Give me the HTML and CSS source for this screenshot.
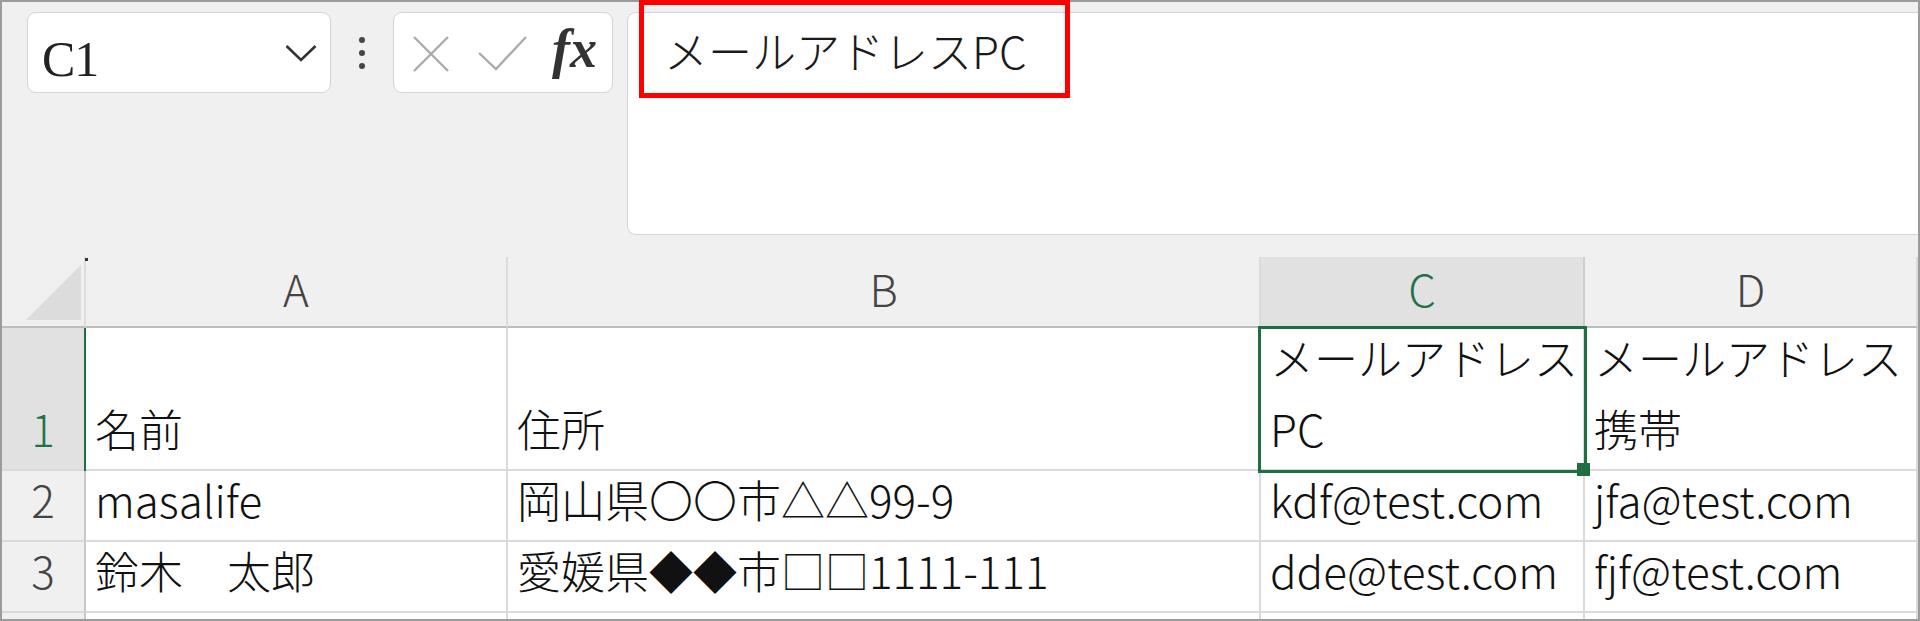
FILE: index.html
```html
<!DOCTYPE html>
<html lang="ja">
<head>
<meta charset="utf-8">
<title>Excel</title>
<link rel="stylesheet" href="styles.css">
</head>
<body>
<div class="frame">
  <div class="toolbar">
    <div class="namebox">
      <span class="ref">C1</span>
      <svg class="chev" width="32" height="18" viewBox="0 0 32 18"><polyline points="1.5,2 16,16 30.5,2" fill="none" stroke="#333" stroke-width="2.6"/></svg>
    </div>
    <div class="more"><i></i><i></i><i></i></div>
    <div class="btns">
      <svg class="ico-x" width="36" height="36" viewBox="0 0 36 36"><path d="M1 1 L35 35 M35 1 L1 35" stroke="#ababab" stroke-width="2.4" fill="none"/></svg>
      <svg class="ico-ok" width="50" height="36" viewBox="0 0 50 36"><polyline points="1,18 18,34 48,2" fill="none" stroke="#ababab" stroke-width="2.4"/></svg>
      <span class="fx">fx</span>
    </div>
    <div class="fbar"><span class="ftext">メールアドレスPC</span></div>
  </div>
  <div class="mark"></div>
  <div class="sheet">
    <div class="corner"><span class="tri"></span></div>
    <div class="ch">A</div>
    <div class="ch">B</div>
    <div class="ch ch-sel">C</div>
    <div class="ch">D</div>

    <div class="rh rh-sel">1</div>
    <div class="c">名前</div>
    <div class="c">住所</div>
    <div class="c c-sel"><span>メールアドレス<br>PC</span><div class="sel"><i class="handle"></i></div></div>
    <div class="c">メールアドレス<br>携帯</div>

    <div class="rh">2</div>
    <div class="c">masalife</div>
    <div class="c">岡山県〇〇市△△99-9</div>
    <div class="c">kdf@test.com</div>
    <div class="c">jfa@test.com</div>

    <div class="rh">3</div>
    <div class="c">鈴木　太郎</div>
    <div class="c">愛媛県◆◆市□□1111-111</div>
    <div class="c">dde@test.com</div>
    <div class="c">fjf@test.com</div>

    <div class="rh last"></div>
    <div class="c last"></div>
    <div class="c last"></div>
    <div class="c last"></div>
    <div class="c last"></div>
  </div>
</div>
</body>
</html>
```
FILE: styles.css
```css
html, body {
  margin: 0;
  padding: 0;
  background: #f0f0f0;
}

.frame {
  width: 1920px;
  height: 621px;
  box-sizing: border-box;
  border: 2px solid #9b9b9b;
  background: #f0f0f0;
  position: relative;
  display: flex;
  flex-direction: column;
  font-family: "Noto Sans CJK JP", "Noto Sans", sans-serif;
  font-weight: 300;
  color: #1a1a1a;
}

/* ---------- formula toolbar ---------- */
.toolbar {
  display: flex;
  align-items: flex-start;
  padding: 10px 0 0 25px;
  height: 223px;
}

.namebox {
  width: 304px;
  height: 81px;
  box-sizing: border-box;
  background: #fff;
  border: 1px solid #d4d4d4;
  border-radius: 9px;
  display: flex;
  align-items: center;
  justify-content: space-between;
  padding: 0 13px 0 14px;
}

.ref {
  font-family: "Liberation Serif", "DejaVu Serif", serif;
  font-weight: 400;
  font-size: 50px;
  color: #222;
  letter-spacing: -1px;
  margin-top: 12px;
}

.chev {
  display: block;
  margin-top: 1px;
}

.more {
  width: 20px;
  height: 81px;
  margin-left: 21px;
  display: flex;
  flex-direction: column;
  align-items: center;
  justify-content: center;
  gap: 7px;
}

.more i {
  display: block;
  width: 6px;
  height: 6px;
  border-radius: 50%;
  background: #454545;
}

.btns {
  width: 220px;
  height: 81px;
  margin-left: 21px;
  box-sizing: border-box;
  background: #fff;
  border: 1px solid #d4d4d4;
  border-radius: 9px;
  display: flex;
  align-items: center;
  padding-left: 19px;
}

.ico-x {
  display: block;
  margin-top: 2px;
}

.ico-ok {
  display: block;
  margin-left: 29px;
  margin-top: 0;
}

.fx {
  font-family: "Liberation Serif", "DejaVu Serif", serif;
  font-style: italic;
  font-weight: bold;
  font-size: 54px;
  color: #333;
  margin-left: 24px;
  margin-bottom: 8px;
}

.fbar {
  flex: 1;
  height: 223px;
  margin-left: 14px;
  box-sizing: border-box;
  background: #fff;
  border: 1px solid #d4d4d4;
  border-right: none;
  border-radius: 9px 0 0 9px;
  padding: 5px 0 0 36px;
}

.ftext {
  font-size: 44px;
  color: #1a1a1a;
}

/* red annotation box */
.mark {
  position: absolute;
  top: -2px;
  left: 637px;
  width: 431px;
  height: 98px;
  box-sizing: border-box;
  border: 5px solid #ff0000;
  z-index: 5;
}

/* ---------- sheet grid ---------- */
.sheet {
  margin-top: 22px;
  flex: 1;
  display: grid;
  grid-template-columns: 84px 422px 753px 324px 1fr;
  grid-template-rows: 71px 143px 71px 71px 1fr;
  background: #fff;
}

.corner {
  position: relative;
  background: #f0f0f0;
  border-right: 2px solid #dcdcdc;
  border-bottom: 2px solid #bdbdbd;
  display: flex;
  align-items: flex-end;
  justify-content: flex-end;
  padding: 0 3px 6px 0;
}

.corner::before {
  content: "";
  position: absolute;
  top: 1px;
  right: -4px;
  width: 3px;
  height: 3px;
  background: #333;
}

.tri {
  display: block;
  width: 0;
  height: 0;
  border-style: solid;
  border-width: 0 0 55px 55px;
  border-color: transparent transparent #dcdcdc transparent;
}

.ch {
  background: #f0f0f0;
  border-right: 2px solid #dcdcdc;
  border-bottom: 2px solid #bdbdbd;
  display: flex;
  align-items: center;
  justify-content: center;
  font-size: 44px;
  color: #444;
  padding-bottom: 8px;
  box-sizing: border-box;
}

.ch-sel {
  background: #e1e1e1;
  color: #217346;
  border-right-color: #cfcfcf;
}

.rh {
  position: relative;
  background: #f0f0f0;
  border-right: 2px solid #c8c8c8;
  border-bottom: 2px solid #dadada;
  display: flex;
  flex-direction: column;
  justify-content: flex-end;
  align-items: center;
  font-size: 44px;
  line-height: 71px;
  padding-bottom: 5px;
  color: #444;
}

.rh-sel {
  background: #e1e1e1;
  color: #217346;
}

.rh-sel::after {
  content: "";
  position: absolute;
  top: 0;
  bottom: -2px;
  right: -4px;
  width: 4px;
  background: #1e6e42;
}

.c {
  position: relative;
  background: #fff;
  border-right: 2px solid #dadada;
  border-bottom: 2px solid #dadada;
  display: flex;
  flex-direction: column;
  justify-content: flex-end;
  font-size: 44px;
  line-height: 71px;
  padding: 0 0 5px 9px;
  white-space: nowrap;
  overflow: visible;
  color: #111;
}

.last {
  border-bottom: none;
  padding-bottom: 0;
}

.sel {
  position: absolute;
  top: -2px;
  left: -3px;
  right: -4px;
  bottom: -4px;
  border: 3px solid #1e6e42;
  z-index: 3;
}

.handle {
  position: absolute;
  right: -6px;
  bottom: -6px;
  width: 13px;
  height: 13px;
  background: #1e6e42;
}
```
